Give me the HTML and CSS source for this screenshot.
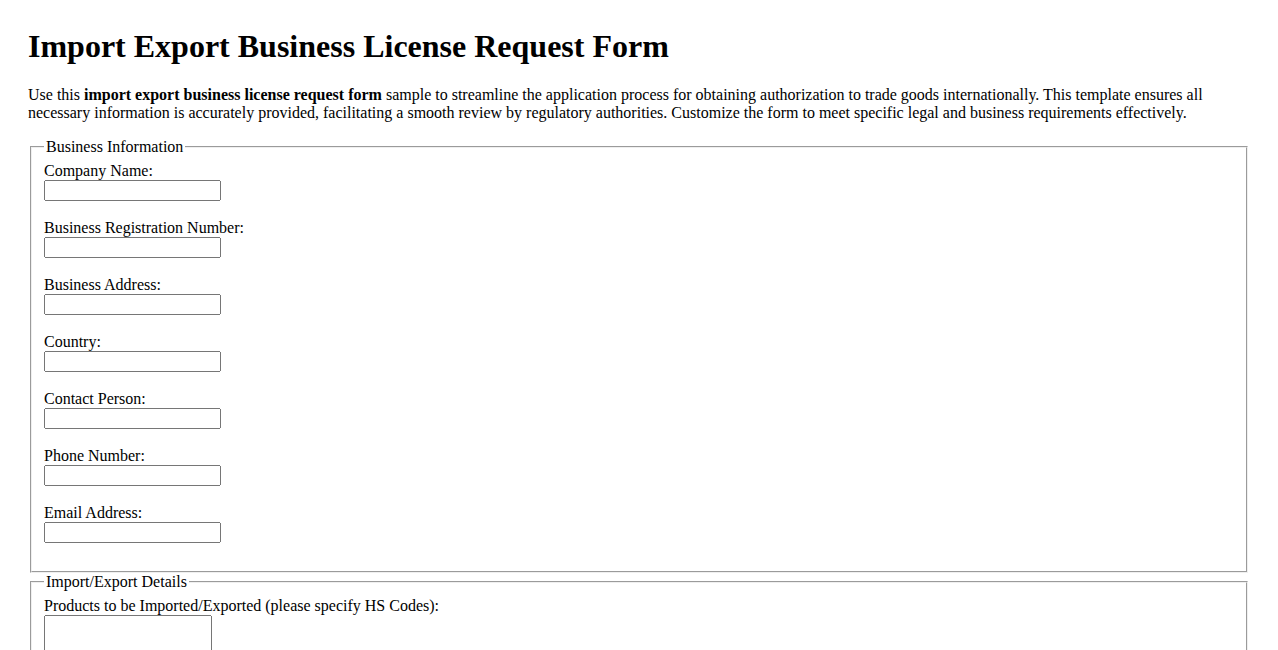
FILE: index.html
```html
<!DOCTYPE html>
<html lang="en">
<head>
<meta charset="utf-8">
<title>Import Export Business License Request Form</title>
<link rel="stylesheet" href="styles.css">
</head>
<body>
<h1 class="page-title">Import Export Business License Request Form</h1>
<p>Use this <strong>import export business license request form</strong> sample to streamline the application process for obtaining authorization to trade goods internationally. This template ensures all necessary information is accurately provided, facilitating a smooth review by regulatory authorities. Customize the form to meet specific legal and business requirements effectively.</p>
<form class="license-form">
  <fieldset>
    <legend>Business Information</legend>
    <label for="company">Company Name:</label><br>
    <input type="text" id="company" name="company"><br><br>
    <label for="regno">Business Registration Number:</label><br>
    <input type="text" id="regno" name="regno"><br><br>
    <label for="address">Business Address:</label><br>
    <input type="text" id="address" name="address"><br><br>
    <label for="country">Country:</label><br>
    <input type="text" id="country" name="country"><br><br>
    <label for="contact">Contact Person:</label><br>
    <input type="text" id="contact" name="contact"><br><br>
    <label for="phone">Phone Number:</label><br>
    <input type="tel" id="phone" name="phone"><br><br>
    <label for="email">Email Address:</label><br>
    <input type="email" id="email" name="email"><br><br>
  </fieldset>
  <fieldset>
    <legend>Import/Export Details</legend>
    <label for="products">Products to be Imported/Exported (please specify HS Codes):</label><br>
    <textarea id="products" name="products"></textarea><br><br>
    <label for="markets">Target Countries/Markets:</label><br>
    <input type="text" id="markets" name="markets"><br><br>
    <label for="volume">Estimated Annual Trade Volume:</label><br>
    <input type="text" id="volume" name="volume"><br><br>
  </fieldset>
  <fieldset>
    <legend>Declaration</legend>
    <input type="checkbox" id="agree" name="agree">
    <label for="agree">I declare that the information provided is true and correct.</label><br><br>
    <input type="submit" value="Submit Request">
  </fieldset>
</form>
</body>
</html>
```

FILE: styles.css
```css
body {
  margin: 28px;
  font-family: "Liberation Serif", "Times New Roman", serif;
  font-size: 16px;
  color: #000;
  background: #fff;
}

.page-title {
  margin-top: 0;
}

.license-form input[type="text"],
.license-form input[type="tel"],
.license-form input[type="email"] {
  width: 177px;
  height: 21px;
  box-sizing: border-box;
}

.license-form textarea {
  width: 168px;
  height: 50px;
  box-sizing: border-box;
}
```
